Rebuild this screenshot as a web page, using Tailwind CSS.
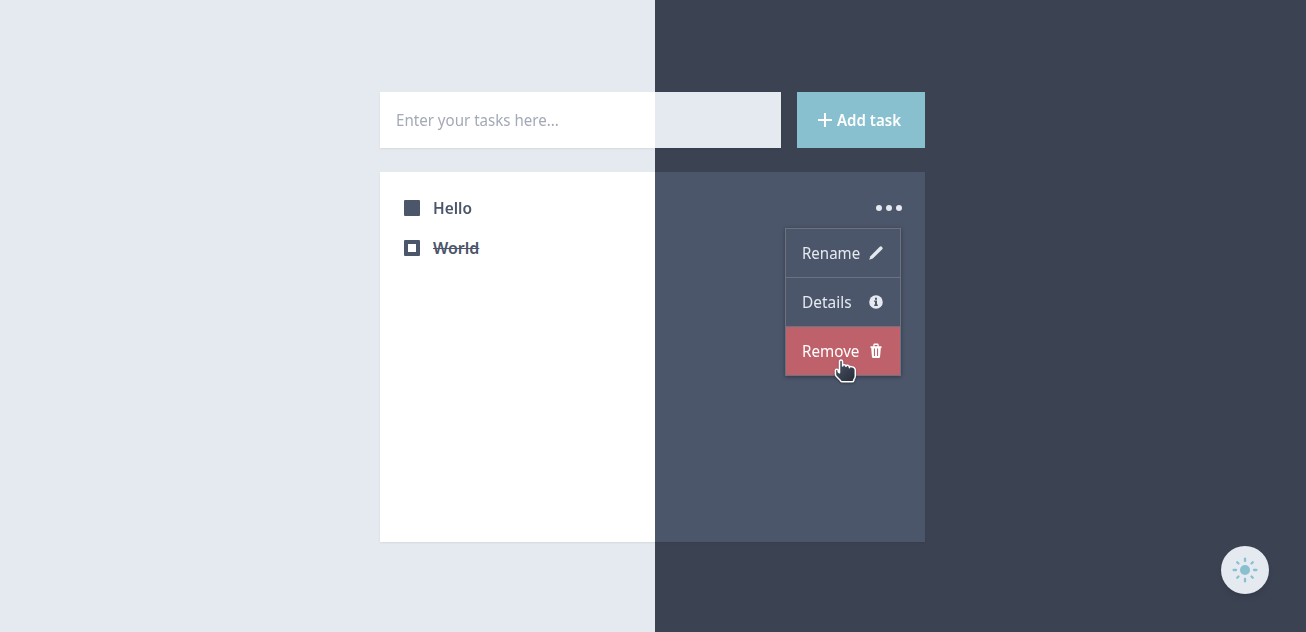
<!DOCTYPE html>
<html lang="en">
<head>
<meta charset="utf-8">
<title>Tasks</title>
<script src="https://cdn.jsdelivr.net/npm/@tailwindcss/browser@4"></script>
</head>
<body class="h-[632px] overflow-hidden bg-[linear-gradient(to_right,#e5e9f0_655px,#3b4252_655px)] font-['Noto_Sans',sans-serif] text-base text-[#4c566a]">
<main class="relative ml-[380px] flex h-full w-[545px] flex-col gap-6 pt-[92px]">
  <form class="flex h-14 gap-4">
    <div class="flex w-[401px] items-center bg-[linear-gradient(to_right,#fff_275px,#e5e9f0_275px)] px-4 text-[#a4a9b5] shadow-[0_1px_2px_rgba(0,0,0,0.07)]"><span class="origin-left scale-x-[0.943]">Enter your tasks here...</span></div>
    <button type="button" class="flex w-32 items-center bg-[#88c0d0] pl-[21px] font-semibold text-white">
      <svg class="mr-[5px] size-[14px] shrink-0" viewBox="0 0 14 14" fill="none" stroke="currentColor" stroke-width="2"><path d="M7 0v14M0 7h14"/></svg>
      <span class="origin-left scale-x-[0.94] whitespace-nowrap">Add task</span>
    </button>
  </form>
  <section class="relative flex h-[370px] justify-between bg-[linear-gradient(to_right,#fff_275px,#4c566a_275px)] px-6 pt-6 shadow-[0_1px_2px_rgba(0,0,0,0.07)]">
    <ul class="flex flex-col gap-4 font-semibold">
      <li class="flex h-6 items-center gap-[13px]"><span class="size-4 rounded-[1px] bg-[#4c566a]"></span><span class="origin-left scale-x-[0.965]">Hello</span></li>
      <li class="flex h-6 items-center gap-[13px]"><span class="size-4 rounded-[1px] border-4 border-[#4c566a] bg-white"></span><span class="origin-left line-through">World</span></li>
    </ul>
    <svg class="-mr-[2px] mt-[9px] h-[6px] w-[28px]" viewBox="0 0 28 6" fill="#e5e9f0"><circle cx="4" cy="3" r="3"/><circle cx="14" cy="3" r="3"/><circle cx="24" cy="3" r="3"/></svg>
    <div class="absolute left-[405px] top-14 h-[148px] w-[116px] divide-y divide-[#6b7280] border border-[#6b7280] text-[#e5e9f0] shadow-[0_1px_4px_rgba(0,0,0,0.35)]">
      <div class="flex h-[49px] items-center justify-between pl-4 pr-[17px]"><span class="-mr-1 origin-left scale-x-[0.94]">Rename</span>
        <svg class="size-[14px] shrink-0" viewBox="0 0 14 14" fill="currentColor"><path d="M.2 13.8 1.4 10.2 10.5 1 Q11.6-.1 12.6.6L13.4 1.4Q14.1 2.4 13 3.5L3.8 12.6Z"/></svg></div>
      <div class="flex h-[49px] items-center justify-between pl-4 pr-[17px]"><span class="origin-left scale-x-[0.965]">Details</span>
        <svg class="size-[14px]" viewBox="0 0 14 14"><circle cx="7" cy="7" r="6.8" fill="#e5e9f0"/><path d="M6 2.7h2v2H6ZM5.2 5.6H8v4h.8V11H5.2V9.6H6V7h-.8Z" fill="#4c566a"/></svg></div>
      <div class="flex h-12 items-center justify-between bg-[#bf616a] pl-4 pr-[17px] text-white"><span class="origin-left scale-x-[0.95]">Remove</span>
        <svg class="-mr-px h-4 w-[14px] shrink-0 -translate-x-px" viewBox="0 0 14 16"><path d="M1.5 3.2H4.3V2Q4.3.6 5.6.6H8.4Q9.7.6 9.7 2V3.2H12.5V5H11.8L11.1 13.6Q11 15.1 9.7 15.1H4.3Q3 15.1 2.9 13.6L2.2 5H1.5ZM5.6 2V3.2H8.4V2ZM4.9 5.4V13H6V5.4ZM8 5.4V13H9.1V5.4Z" fill="white" fill-rule="evenodd"/></svg></div>
    </div>
  </section>
  <svg class="absolute left-[453px] top-[358px] h-[28px] w-[26px] drop-shadow-[0_1px_1px_rgba(0,0,0,0.35)]" viewBox="0 0 26 28">
    <defs><linearGradient id="hand" x1="0" y1="0" x2="1" y2="1"><stop stop-color="#4c566a"/><stop offset="1" stop-color="#242a36"/></linearGradient></defs>
    <path d="M6.5 13V3.8Q6.5 2.1 8 2.1T9.6 3.8V8.1Q9.8 6.5 11.4 6.8T13 8.5Q13.2 6.9 14.8 7.3T16.4 9.1V9.7Q16.7 8.1 18.8 8.7Q22.3 9.2 22.3 12.5V18Q22.2 20 20.9 21.5V22.2Q20.5 23.8 19 23.8H9.3Q8.2 23.8 7.4 22.6L3.2 18.3Q2.4 17.4 2.4 15.6V12.6Q2.5 11.2 3.8 11.3T5.2 12.6V13.8L6.5 14.8Z" fill="url(#hand)" stroke="white" stroke-width="1.5" stroke-linejoin="round"/>
  </svg>
</main>
<button type="button" aria-label="Toggle theme" class="fixed bottom-[38px] right-[37px] grid size-12 place-items-center rounded-full bg-[#e5e9f0] shadow-md">
  <svg class="size-[26px]" viewBox="0 0 26 26" stroke="#88c0d0" stroke-width="2.3" stroke-linecap="round"><circle cx="13" cy="13" r="5" fill="#88c0d0" stroke="none"/><path d="M13 1.6V4M13 22V24.4M1.6 13H4M22 13H24.4M5.2 5.2 6.5 6.5M19.5 19.5 20.8 20.8M5.2 20.8 6.5 19.5M19.5 6.5 20.8 5.2"/></svg>
</button>
</body>
</html>
